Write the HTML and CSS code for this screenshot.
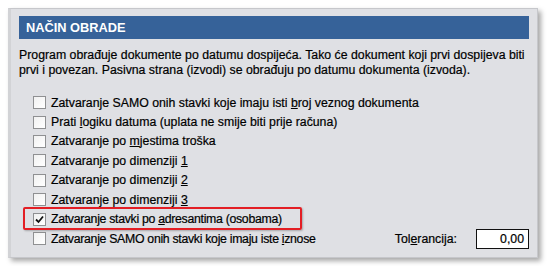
FILE: index.html
```html
<!DOCTYPE html>
<html lang="hr">
<head>
    <meta charset="UTF-8">
    <title>Način obrade</title>
    <link rel="stylesheet" href="styles.css">
</head>
<body>
    <div class="panel">
        <div class="panel-title">NAČIN OBRADE</div>
        <p class="intro">Program obrađuje dokumente po datumu dospijeća. Tako će dokument koji prvi dospijeva biti prvi i povezan. Pasivna strana (izvodi) se obrađuju po datumu dokumenta (izvoda).</p>

        <div class="options">
            <label class="option"><span class="box"></span><span>Zatvaranje SAMO onih stavki koje imaju isti <u>b</u>roj veznog dokumenta</span></label>
            <label class="option"><span class="box"></span><span>Prati <u>l</u>ogiku datuma (uplata ne smije biti prije računa)</span></label>
            <label class="option"><span class="box"></span><span>Zatvaranje po <u>m</u>jestima troška</span></label>
            <label class="option"><span class="box"></span><span>Zatvaranje po dimenziji <u>1</u></span></label>
            <label class="option"><span class="box"></span><span>Zatvaranje po dimenziji <u>2</u></span></label>
            <label class="option"><span class="box"></span><span>Zatvaranje po dimenziji <u>3</u></span></label>
            <label class="option highlight"><span class="box">
                <svg width="9" height="9" viewBox="0 0 9 9"><path d="M1 4.5 L3.5 7 L8 1.5" fill="none" stroke="#111" stroke-width="1.8"/></svg>
            </span><span class="tight">Zatvaranje stavki po <u>a</u>dresantima (osobama)</span></label>
            <div class="last-row">
                <label class="option"><span class="box"></span><span class="tight">Zatvaranje SAMO onih stavki koje imaju iste <u>i</u>znose</span></label>
                <div class="tolerance">
                    <span>Tol<u>e</u>rancija:</span>
                    <div class="field">0,00</div>
                </div>
            </div>
        </div>
    </div>
</body>
</html>
```
FILE: styles.css
```css
* {
    margin: 0;
    padding: 0;
    box-sizing: border-box;
}

body {
    background-color: #ffffff;
    padding: 8px;
    font-family: "Liberation Sans", Arial, sans-serif;
    font-size: 12.3px;
    color: #000000;
    -webkit-text-stroke: 0.2px #000000;
}

.panel {
    width: 530px;
    height: 250px;
    background-color: #dfe0e4;
    border: 1px solid #c6c7cb;
    border-left: 3px solid #d2d3d6;
    padding: 7px 8px 0 8px;
    box-shadow: 3px 3px 5px rgba(0, 0, 0, 0.35);
}

.panel-title {
    height: 23px;
    background-color: #366299;
    color: #ffffff;
    -webkit-text-stroke: 0;
    font-size: 12.8px;
    font-weight: bold;
    line-height: 23px;
    padding-left: 7px;
}

.intro {
    margin-top: 9px;
    line-height: 15px;
}

.options {
    margin-top: 15px;
    padding-left: 14px;
}

.option {
    display: flex;
    align-items: center;
    height: 19.4px;
    white-space: nowrap;
}

.tight {
    letter-spacing: -0.3px;
}

.box {
    width: 13px;
    height: 13px;
    border: 1px solid #8f9092;
    background: linear-gradient(135deg, #f1f1f1, #ffffff);
    margin-right: 5px;
    display: flex;
    align-items: center;
    justify-content: center;
    flex-shrink: 0;
}

.highlight {
    position: relative;
}

.highlight::before {
    content: "";
    position: absolute;
    left: -10px;
    top: -2px;
    width: 275px;
    height: 19px;
    border: 2px solid #e31e24;
    border-radius: 2px;
    box-shadow: 1px 1px 2px rgba(0, 0, 0, 0.25);
}

.last-row {
    display: flex;
    align-items: center;
    justify-content: space-between;
}

.tolerance {
    display: flex;
    align-items: center;
    gap: 19px;
}

.field {
    width: 53px;
    height: 20px;
    border: 1px solid #111111;
    background-color: #ffffff;
    text-align: right;
    line-height: 18px;
    padding-right: 4px;
}
```
